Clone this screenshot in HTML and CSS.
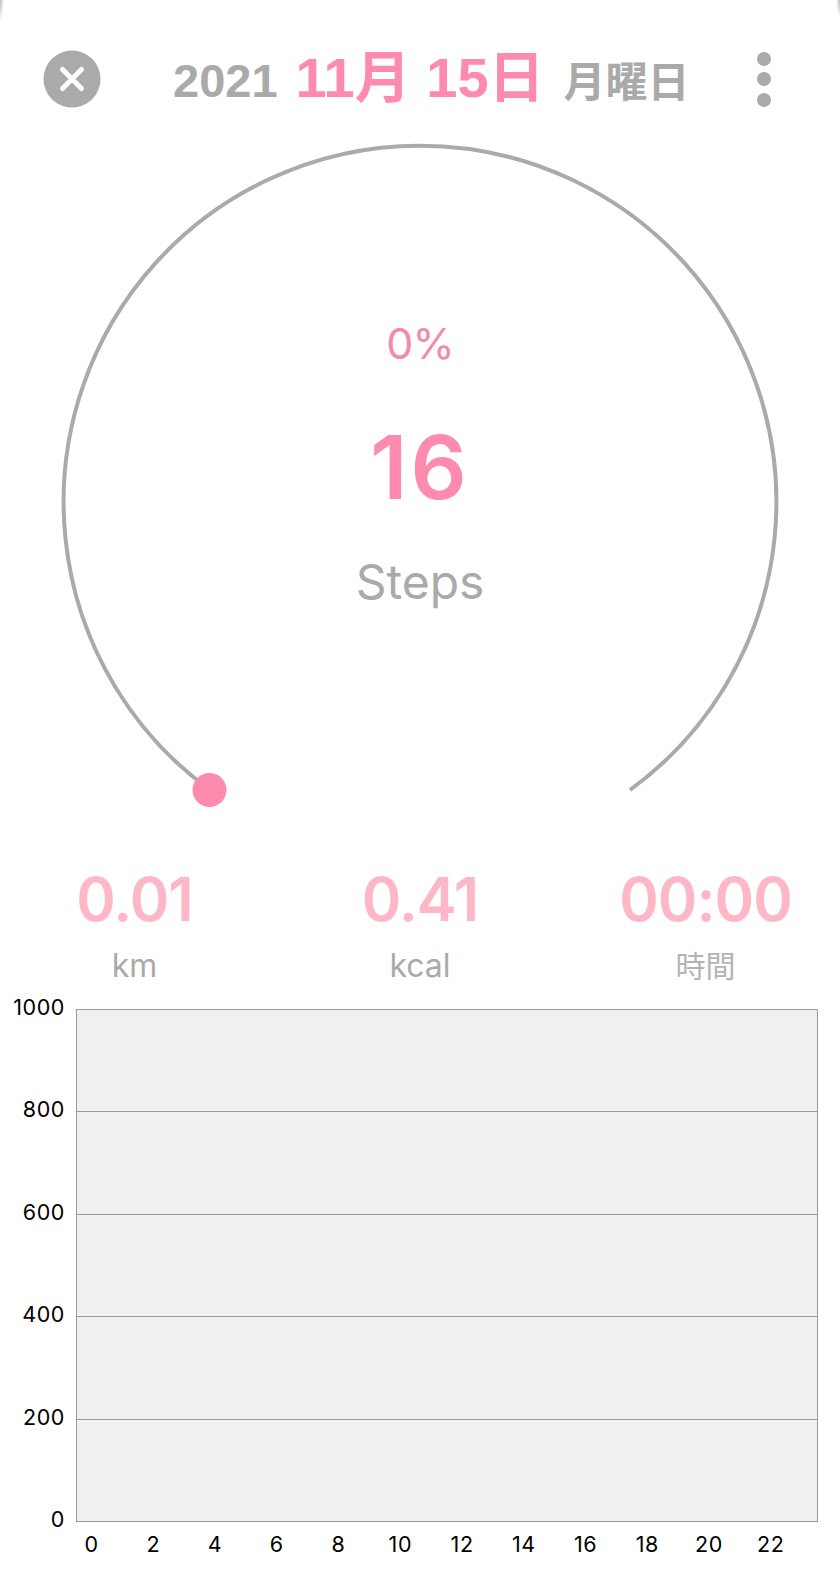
FILE: index.html
```html
<!DOCTYPE html>
<html lang="ja">

<head>
    <meta charset="UTF-8">
    <title>歩数</title>
    <link rel="stylesheet" href="styles.css">
</head>

<body>
    <div class="sheet">
        <div class="topBar">
            <svg class="closeIcon" width="58" height="58" viewBox="0 0 58 58">
                <circle cx="29" cy="29" r="28.5" fill="#aaa" />
                <path d="M19.5 19.5 L38.5 38.5 M38.5 19.5 L19.5 38.5" stroke="#fff" stroke-width="5" stroke-linecap="round" />
            </svg>
            <div class="dateText">
                <span class="year">2021</span>
                <span class="day">11月 15日</span>
                <span class="week">月曜日</span>
            </div>
            <div class="moreDots">
                <span></span>
                <span></span>
                <span></span>
            </div>
        </div>

        <div class="gauge">
            <svg class="gaugeRing" width="840" height="700" viewBox="0 0 840 700">
                <path d="M210 656 A356.4 356.4 0 1 1 630 656" fill="none" stroke="#aaa" stroke-width="4" />
                <circle cx="209.5" cy="656" r="17" fill="#fe8aad" />
            </svg>
            <div class="gaugeText">
                <div class="percent">0%</div>
                <div class="steps">16</div>
                <div class="stepsLabel">Steps</div>
            </div>
        </div>

        <div class="stats">
            <div class="stat">
                <div class="statValue">0.01</div>
                <div class="statLabel">km</div>
            </div>
            <div class="stat">
                <div class="statValue">0.41</div>
                <div class="statLabel">kcal</div>
            </div>
            <div class="stat">
                <div class="statValue">00:00</div>
                <div class="statLabel statLabelJa">時間</div>
            </div>
        </div>

        <div class="chart">
            <div class="yAxis">
                <span>1000</span>
                <span>800</span>
                <span>600</span>
                <span>400</span>
                <span>200</span>
                <span>0</span>
            </div>
            <div class="plot">
                <div class="gridRow"></div>
                <div class="gridRow"></div>
                <div class="gridRow"></div>
                <div class="gridRow"></div>
                <div class="gridRow"></div>
            </div>
            <div class="xAxis">
                <span>0</span>
                <span>2</span>
                <span>4</span>
                <span>6</span>
                <span>8</span>
                <span>10</span>
                <span>12</span>
                <span>14</span>
                <span>16</span>
                <span>18</span>
                <span>20</span>
                <span>22</span>
            </div>
        </div>
    </div>
</body>

</html>
```

FILE: styles.css
```css
html, body {
    margin: 0;
    padding: 0;
}

body {
    width: 840px;
    height: 1591px;
    overflow: hidden;
    background-color: #fff;
    font-family: "Inter", "Noto Sans CJK JP", sans-serif;
}

.sheet {
    position: relative;
    height: 1591px;
    background-color: #fff;
    padding-top: 50px;
    box-sizing: border-box;
}

/* faint slivers left of the rounded sheet corners */
.sheet::before,
.sheet::after {
    content: "";
    position: absolute;
    top: 0;
    width: 4px;
    height: 22px;
}

.sheet::before {
    left: 0;
    background: radial-gradient(ellipse 4px 22px at 0 0, #bbb, #fff);
}

.sheet::after {
    right: 0;
    background: radial-gradient(ellipse 4px 18px at 100% 0, #bbb, #fff);
}

.topBar {
    display: flex;
    align-items: center;
    height: 58px;
    padding: 0 69px 0 43px;
}

.closeIcon {
    flex: none;
}

.dateText {
    margin-left: 72px;
    margin-bottom: 14px;
    display: flex;
    align-items: baseline;
    font-family: "Liberation Sans", "Noto Sans CJK JP", sans-serif;
    font-weight: bold;
    color: #aaa;
    font-size: 42px;
    white-space: nowrap;
}

.year {
    font-size: 47px;
    margin-right: 18px;
}

.day {
    color: #fe8aad;
    font-size: 56px;
    margin-right: 19px;
}

.moreDots {
    display: flex;
    flex-direction: column;
    gap: 6.5px;
    margin-left: auto;
}

.moreDots span {
    width: 14px;
    height: 14px;
    border-radius: 50%;
    background-color: #aaa;
}

.gauge {
    position: relative;
    height: 700px;
    margin-top: 26px;
}

.gaugeRing {
    position: absolute;
    left: 0;
    top: 0;
}

.gaugeText {
    position: absolute;
    left: 0;
    right: 0;
    top: 184px;
    text-align: center;
}

.percent {
    color: #f08bab;
    font-size: 43px;
    letter-spacing: -1px;
    line-height: 50px;
}

.steps {
    color: #fe8aad;
    font-size: 88px;
    font-weight: 600;
    letter-spacing: 3px;
    line-height: 100px;
    margin-top: 49px;
}

.stepsLabel {
    color: #aaa;
    font-size: 48px;
    line-height: 58px;
    margin-top: 36px;
}

.stats {
    display: grid;
    grid-template-columns: repeat(3, 285.5px);
    justify-content: center;
    text-align: center;
    margin-top: 30px;
}

.statValue {
    color: #feb7c6;
    font-size: 60px;
    font-weight: 600;
    letter-spacing: -1px;
    line-height: 70px;
}

.statLabel {
    color: #aaa;
    font-size: 32px;
    line-height: 40px;
    margin-top: 12px;
}

.statLabelJa {
    font-size: 30px;
    color: #b4b4b4;
}

.chart {
    position: relative;
    margin-top: 23px;
    height: 560px;
}

.plot {
    position: absolute;
    left: 76px;
    top: 0;
    width: 742px;
    height: 513px;
    background-color: #f0f0f0;
    border: 1px solid #999;
    box-sizing: border-box;
    display: flex;
    flex-direction: column;
}

.gridRow {
    flex: 1;
    border-bottom: 1px solid #999;
}

.gridRow:last-child {
    border-bottom: none;
}

.yAxis {
    position: absolute;
    left: 0;
    top: -14px;
    width: 65px;
    height: 536px;
    display: flex;
    flex-direction: column;
    justify-content: space-between;
    align-items: flex-end;
    font-size: 21.5px;
    letter-spacing: 0.6px;
    line-height: 24px;
    color: #000;
}

.xAxis {
    position: absolute;
    left: 60.7px;
    top: 523px;
    display: grid;
    grid-template-columns: repeat(12, 61.75px);
    font-size: 21.5px;
    letter-spacing: 0.6px;
    line-height: 24px;
    color: #000;
    text-align: center;
}
```
